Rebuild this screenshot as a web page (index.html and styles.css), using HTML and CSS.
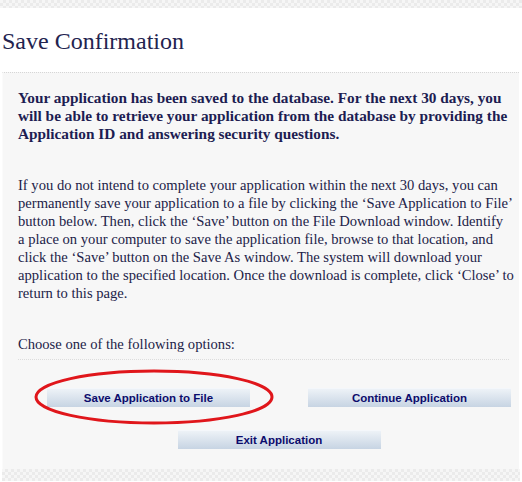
FILE: index.html
```html
<!DOCTYPE html>
<html>
<head>
<meta charset="utf-8">
<title>Save Confirmation</title>
<link rel="stylesheet" href="styles.css">
</head>
<body>
<div class="strip"></div>
<h1 class="title">Save Confirmation</h1>
<div class="panel">
  <p class="lead">Your application has been saved to the database. For the next 30 days, you<br>will be able to retrieve your application from the database by providing the<br>Application ID and answering security questions.</p>
  <p class="info">If you do not intend to complete your application within the next 30 days, you can<br>permanently save your application to a file by clicking the ‘Save Application to File’<br>button below. Then, click the ‘Save’ button on the File Download window. Identify<br>a place on your computer to save the application file, browse to that location, and<br>click the ‘Save’ button on the Save As window. The system will download your<br>application to the specified location. Once the download is complete, click ‘Close’ to<br>return to this page.</p>
  <p class="choose">Choose one of the following options:</p>
  <div class="actions">
    <div class="row">
      <span class="btn-wrap">
        <button class="btn">Save Application to File</button>
        <svg class="ring" width="244" height="60" viewBox="0 0 244 60"><ellipse cx="122" cy="30" rx="118" ry="26" fill="none" stroke="#e0161b" stroke-width="3"/></svg>
      </span>
      <button class="btn">Continue Application</button>
    </div>
    <div class="row center">
      <button class="btn">Exit Application</button>
    </div>
  </div>
</div>
<div class="strip bottom"></div>
</body>
</html>
```

FILE: styles.css
```css
html, body {
  margin: 0;
  padding: 0;
  background: #ffffff;
  width: 522px;
  height: 482px;
  overflow: hidden;
}
body {
  font-family: "Liberation Serif", "Times New Roman", serif;
  color: #222250;
  display: flex;
  flex-direction: column;
}
.strip {
  height: 8px;
  background-color: #f4f4f4;
  background-image: repeating-conic-gradient(#ebebeb 0 25%, #f6f6f6 0 50%);
  background-size: 6px 6px;
}
.strip.bottom {
  height: 12px;
  margin: 0 2px;
}
.title {
  margin: 19px 0 17px 2px;
  font-size: 24px;
  line-height: 28px;
  font-weight: normal;
  color: #23234f;
}
.panel {
  margin: 0 3px 0 2px;
  height: 397px;
  box-sizing: border-box;
  background: #f7f7f7;
  border-top: 1px dotted #d6d6d6;
  border-left: 1px solid #fbfbfb;
  padding: 16px 10px 0 15px;
}
.panel p {
  margin: 0;
  font-size: 14.6px;
  line-height: 18px;
  white-space: nowrap;
}
.panel p.lead {
  font-weight: bold;
  font-size: 15.3px;
  color: #1d1d52;
}
.info {
  padding-top: 33px;
  color: #222248;
}
.choose {
  padding-top: 33px;
  padding-bottom: 6px;
  border-bottom: 1px dotted #dcdcdc;
  color: #222248;
}
.actions {
  padding: 28px 0 0 29px;
  display: flex;
  flex-direction: column;
  gap: 23px;
  width: 464px;
}
.row {
  display: flex;
  gap: 58px;
}
.row.center {
  justify-content: center;
}
.btn-wrap {
  position: relative;
  display: flex;
}
.ring {
  position: absolute;
  left: -15px;
  top: -21px;
  pointer-events: none;
}
.btn {
  width: 203px;
  height: 19px;
  padding: 0;
  border: none;
  border-top: 1px solid #f4f7fb;
  background: linear-gradient(#edf2f7, #c7d4e3);
  font-family: "Liberation Sans", Arial, sans-serif;
  font-weight: bold;
  font-size: 11.5px;
  color: #0c0c6c;
}
```
